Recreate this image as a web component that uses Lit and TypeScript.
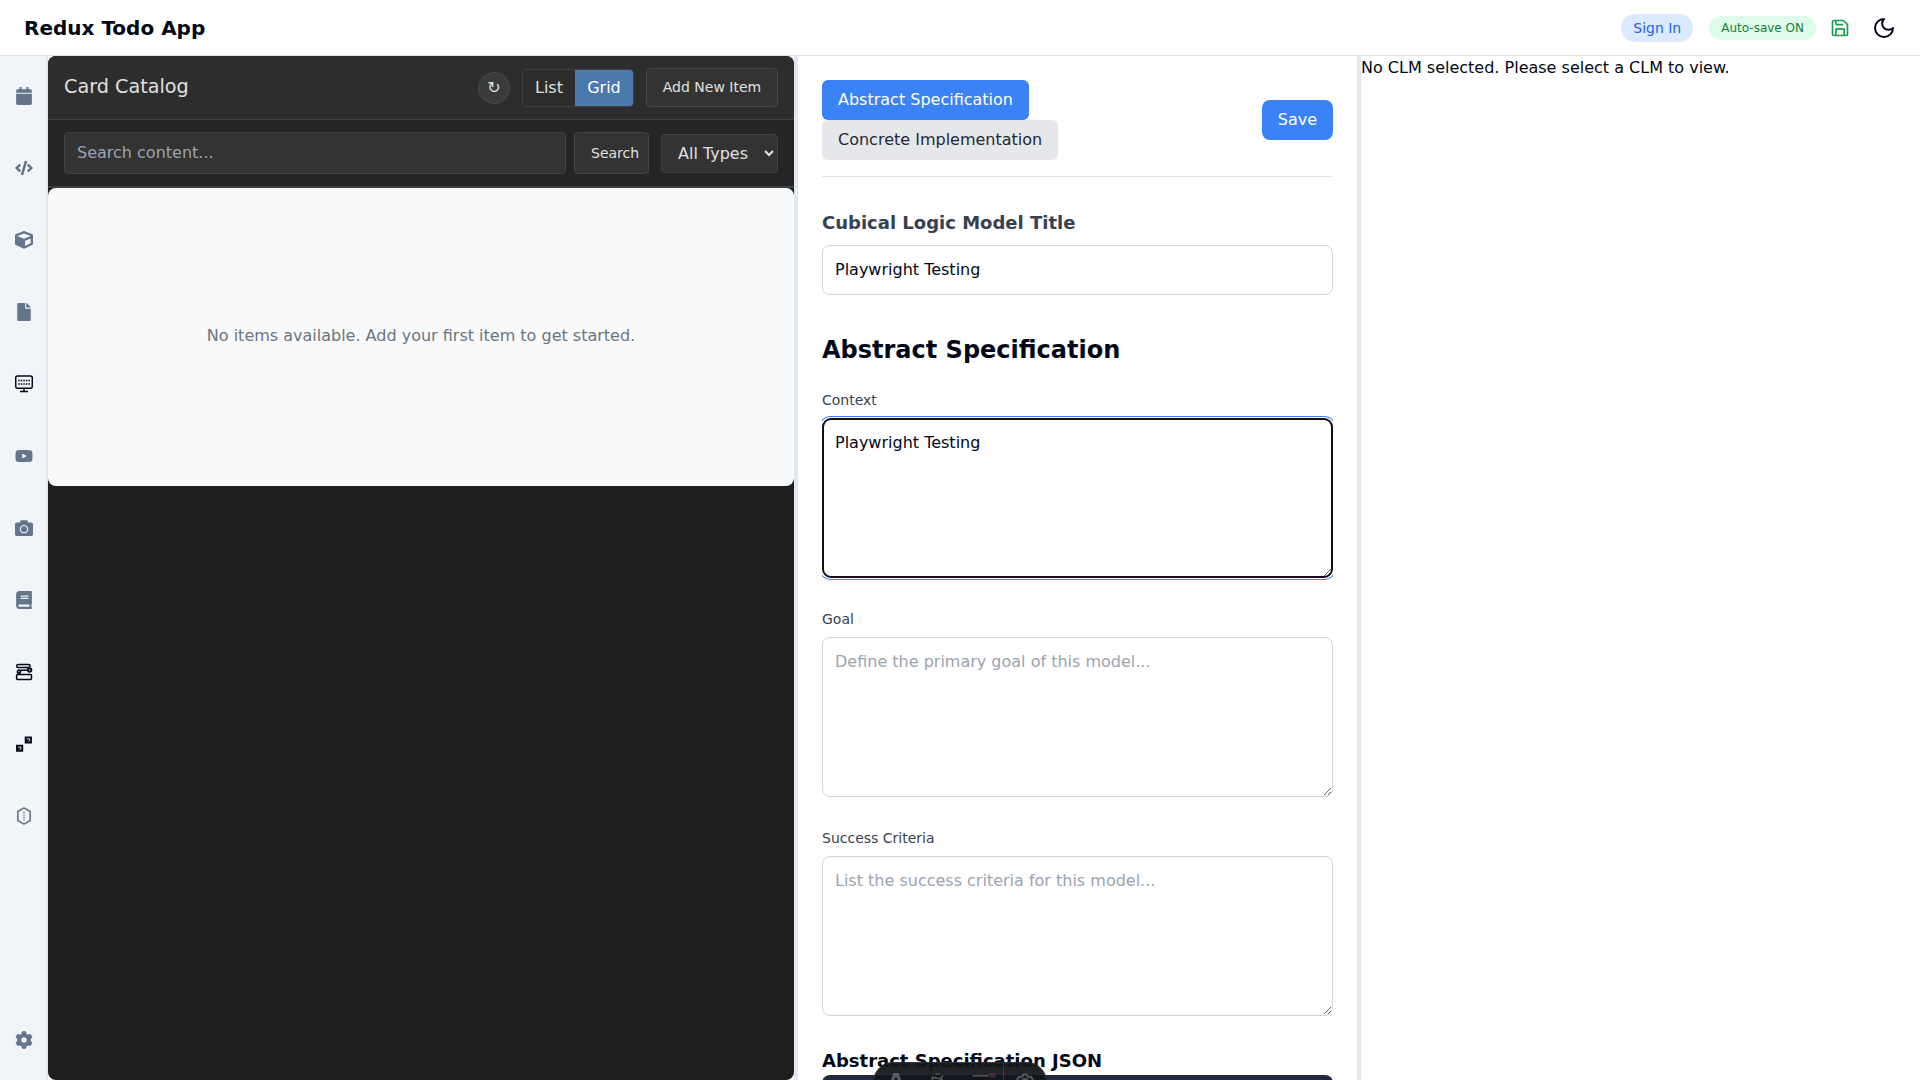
import { LitElement, html, css, svg } from "lit";
import { customElement } from "lit/decorators.js";

const SLATE = "#64748b";
const INK = "#020817";

interface NavIcon {
  box: string;
  body: unknown;
  color: string;
}

const solid = (box: string, d: string): NavIcon => ({ box, color: SLATE, body: svg`<path d=${d}></path>` });

const NAV: NavIcon[] = [
  solid("0 0 448 512", "M12 192h424c6.600 0 12 5.400 12 12v260c0 26.500-21.500 48-48 48H48c-26.500 0-48-21.500-48-48V204c0-6.600 5.400-12 12-12zm436-44v-36c0-26.500-21.500-48-48-48h-48V12c0-6.600-5.400-12-12-12h-40c-6.600 0-12 5.400-12 12v52H160V12c0-6.600-5.400-12-12-12h-40c-6.600 0-12 5.400-12 12v52H48C21.500 64 0 85.500 0 112v36c0 6.600 5.400 12 12 12h424c6.600 0 12-5.400 12-12z"),
  solid("0 0 640 512", "M278.900 511.500l-61-17.700c-6.400-1.800-10-8.500-8.200-14.900L346.200 8.700c1.800-6.400 8.500-10 14.900-8.200l61 17.700c6.400 1.800 10 8.500 8.200 14.900L293.800 503.300c-1.900 6.400-8.500 10.100-14.900 8.200zm-114-112.200l43.500-46.400c4.600-4.900 4.300-12.700-.8-17.200L117 256l90.600-79.700c5.100-4.500 5.500-12.300.8-17.200l-43.500-46.400c-4.500-4.800-12.100-5.100-17-.5L3.800 247.200c-5.100 4.700-5.100 12.800 0 17.500l144.100 135.100c4.900 4.600 12.500 4.400 17-.5zm327.200.6l144.100-135.100c5.100-4.700 5.100-12.800 0-17.500L492.100 112.100c-4.800-4.500-12.400-4.300-17 .5L431.600 159c-4.600 4.900-4.300 12.700.8 17.200L523 256l-90.600 79.700c-5.100 4.500-5.500 12.300-.8 17.200l43.500 46.400c4.500 4.900 12.100 5.100 17 .6z"),
  solid("0 0 512 512", "M239.100 6.300l-208 78c-18.700 7-31.100 25-31.100 45v225.100c0 18.200 10.300 34.800 26.500 42.900l208 104c13.500 6.800 29.400 6.800 42.900 0l208-104c16.300-8.100 26.500-24.800 26.500-42.900V129.300c0-20-12.400-37.900-31.100-44.900l-208-78C262 2.200 250 2.200 239.100 6.300zM256 68.400l192 72v1.100l-192 78-192-78v-1.100l192-72zm32 356V275.500l160-65v133.900l-160 80z"),
  solid("0 0 384 512", "M224 136V0H24C10.700 0 0 10.700 0 24v464c0 13.300 10.700 24 24 24h336c13.300 0 24-10.700 24-24V160H248c-13.200 0-24-10.800-24-24zm160-14.100v6.100H256V0h6.100c6.400 0 12.500 2.500 17 7l97.900 98c4.500 4.500 7 10.600 7 16.900z"),
  {
    box: "0 0 18 18",
    color: INK,
    body: svg`
      <rect x="0.700" y="0.900" width="16.600" height="12.400" rx="1.900" fill="none" stroke="currentColor" stroke-width="1.500"></rect>
      <path d="M3.200 5.600h11.800M3.200 9h11.800" fill="none" stroke="currentColor" stroke-width="1.500" stroke-dasharray="1.500 1.050"></path>
      <path d="M9 13.300v2.800M5 16.600h8" fill="none" stroke="currentColor" stroke-width="1.500"></path>`,
  },
  solid("0 0 576 512", "M549.655 124.083c-6.281-23.650-24.787-42.276-48.284-48.597C458.781 64 288 64 288 64S117.220 64 74.629 75.486c-23.497 6.322-42.003 24.947-48.284 48.597-11.412 42.867-11.412 132.305-11.412 132.305s0 89.438 11.412 132.305c6.281 23.650 24.787 41.500 48.284 47.821C117.220 448 288 448 288 448s170.780 0 213.371-11.486c23.497-6.321 42.003-24.171 48.284-47.821 11.412-42.867 11.412-132.305 11.412-132.305s0-89.438-11.412-132.305zm-317.510 213.508V175.185l142.739 81.205-142.739 81.201z"),
  solid("0 0 512 512", "M512 144v288c0 26.500-21.500 48-48 48H48c-26.500 0-48-21.500-48-48V144c0-26.500 21.500-48 48-48h88l12.300-32.900c7-18.700 24.900-31.100 44.900-31.100h125.500c20 0 37.900 12.400 44.900 31.100L376 96h88c26.500 0 48 21.500 48 48zM376 288c0-66.200-53.800-120-120-120s-120 53.800-120 120 53.800 120 120 120 120-53.800 120-120zm-32 0c0 48.500-39.500 88-88 88s-88-39.500-88-88 39.500-88 88-88 88 39.500 88 88z"),
  solid("0 0 448 512", "M448 360V24c0-13.300-10.700-24-24-24H96C43 0 0 43 0 96v320c0 53 43 96 96 96h328c13.300 0 24-10.700 24-24v-16c0-7.500-3.500-14.300-8.900-18.700-4.200-15.400-4.200-59.300 0-74.700 5.400-4.300 8.900-11.100 8.900-18.600zM128 134c0-3.300 2.700-6 6-6h212c3.300 0 6 2.700 6 6v20c0 3.300-2.700 6-6 6H134c-3.300 0-6-2.700-6-6v-20zm0 64c0-3.300 2.700-6 6-6h212c3.300 0 6 2.700 6 6v20c0 3.300-2.700 6-6 6H134c-3.300 0-6-2.700-6-6v-20zm253.400 250H96c-17.700 0-32-14.300-32-32 0-17.600 14.400-32 32-32h285.400c-1.900 17.100-1.900 46.900 0 64z"),
  {
    box: "0 0 18 18",
    color: INK,
    body: svg`
      <path d="M15 4V2.700a1.100 1.100 0 0 0-1.100-1.100H3.200a1.400 1.400 0 0 0 0 3H14.500M5.500 7.200H12" fill="none" stroke="currentColor" stroke-width="1.500"></path>
      <circle cx="4" cy="8.700" r="1.500" fill="none" stroke="currentColor" stroke-width="1.800"></circle>
      <circle cx="14.600" cy="7" r="1.700" fill="none" stroke="currentColor" stroke-width="2"></circle>
      <rect x="1.600" y="11.600" width="14.900" height="5" rx="1" fill="none" stroke="currentColor" stroke-width="1.500"></rect>`,
  },
  {
    box: "0 0 18 18",
    color: INK,
    body: svg`
      <path d="M9.700 1.400h7.200v7H9.700zM1 9.700h7.200v7H1z"></path>
      <path d="M11.800 3.800h2.800v1.900l-1.300.8M3.100 12.100h2.800v1.900l-1.300.8" fill="none" stroke="#f1f5f9" stroke-width="0.900"></path>`,
  },
  {
    box: "0 0 18 18",
    color: SLATE,
    body: svg`
      <path d="M9 .9l6.200 3.600v9L9 17.100l-6.200-3.600v-9z" fill="none" stroke="currentColor" stroke-width="1.600" stroke-linejoin="round"></path>
      <path d="M9 5v8.600" fill="none" stroke="currentColor" stroke-width="1.500" stroke-dasharray="1.200 1.200"></path>`,
  },
];

const COG = solid("0 0 512 512", "M487.400 315.700l-42.600-24.600c4.300-23.200 4.300-47 0-70.200l42.600-24.600c4.900-2.800 7.100-8.600 5.500-14-11.100-35.600-30-67.800-54.700-94.600-3.800-4.100-10-5.100-14.800-2.300L380.800 110c-17.900-15.400-38.500-27.300-60.800-35.100V25.800c0-5.600-3.900-10.500-9.400-11.700-36.700-8.200-74.300-7.800-109.200 0-5.500 1.200-9.400 6.100-9.400 11.700V75c-22.200 7.900-42.800 19.800-60.800 35.100L88.700 85.500c-4.900-2.800-11-1.900-14.800 2.300-24.700 26.700-43.600 58.900-54.700 94.600-1.700 5.400.6 11.200 5.500 14L67.300 221c-4.300 23.200-4.300 47 0 70.200l-42.600 24.600c-4.900 2.800-7.100 8.600-5.500 14 11.100 35.600 30 67.800 54.700 94.600 3.800 4.100 10 5.100 14.800 2.300l42.600-24.600c17.900 15.400 38.500 27.300 60.800 35.100v49.200c0 5.600 3.900 10.500 9.400 11.700 36.700 8.200 74.300 7.800 109.200 0 5.500-1.200 9.400-6.100 9.400-11.700v-49.200c22.200-7.900 42.800-19.800 60.800-35.100l42.600 24.600c4.900 2.800 11 1.900 14.800-2.300 24.700-26.700 43.600-58.900 54.700-94.600 1.500-5.500-.7-11.300-5.600-14.100zM256 336c-44.100 0-80-35.900-80-80s35.900-80 80-80 80 35.900 80 80-35.900 80-80 80z");

const shared = css`
  *, *::before, *::after { box-sizing: border-box; }
  button, input, select, textarea { font: inherit; color: inherit; margin: 0; }
  h1, h2, h3, p { margin: 0; }
  svg { display: block; }
`;

@customElement("app-header")
class AppHeader extends LitElement {
  static styles = [shared, css`
    :host { display: flex; align-items: center; justify-content: space-between; height: 56px; padding: 0 24px; background: #fff; border-bottom: 1px solid #e2e4e7; }
    .title { font-size: 20px; line-height: 28px; font-weight: 700; }
    .actions { display: flex; align-items: center; }
    .signin { height: 28px; padding: 4px 12px; border: 0; border-radius: 14px; background: #dbeafe; color: #2563eb; font-size: 14px; line-height: 20px; margin-right: 16px; }
    .autosave { height: 24px; padding: 4px 12px; border-radius: 12px; background: #dcfce7; color: #15803d; font-size: 12px; line-height: 16px; margin-right: 14px; }
    .disk { color: #16a34a; margin-right: 22px; }
  `];
  render() {
    return html`
      <h1 class="title">Redux Todo App</h1>
      <div class="actions">
        <button class="signin">Sign In</button>
        <span class="autosave">Auto-save ON</span>
        <svg class="disk" width="20" height="20" viewBox="0 0 24 24" fill="none" stroke="currentColor" stroke-width="2" stroke-linecap="round" stroke-linejoin="round">
          <path d="M15.200 3a2 2 0 0 1 1.400.6l3.800 3.800a2 2 0 0 1 .6 1.400V19a2 2 0 0 1-2 2H5a2 2 0 0 1-2-2V5a2 2 0 0 1 2-2z"></path>
          <path d="M17 21v-7a1 1 0 0 0-1-1H8a1 1 0 0 0-1 1v7"></path>
          <path d="M7 3v4a1 1 0 0 0 1 1h7"></path>
        </svg>
        <svg width="24" height="24" viewBox="0 0 24 24" fill="none" stroke="currentColor" stroke-width="2" stroke-linecap="round" stroke-linejoin="round">
          <path d="M12 3a6 6 0 0 0 9 9 9 9 0 1 1-9-9Z"></path>
        </svg>
      </div>`;
  }
}

@customElement("side-nav")
class SideNav extends LitElement {
  static styles = [shared, css`
    :host { display: flex; flex-direction: column; justify-content: space-between; width: 48px; padding: 4px 0; background: #f1f5f9; border-right: 2px solid #e5e7eb; }
    .item { display: flex; align-items: center; justify-content: center; width: 48px; height: 72px; }
    .item svg { width: 18px; height: 18px; fill: currentColor; }
    .slate { color: #64748b; }
    .ink { color: #020817; }
  `];
  private icon(i: NavIcon) {
    return html`<div class="item ${i.color === SLATE ? "slate" : "ink"}"><svg viewBox=${i.box}>${i.body}</svg></div>`;
  }
  render() {
    return html`<div>${NAV.map((i) => this.icon(i))}</div><div>${this.icon(COG)}</div>`;
  }
}

@customElement("card-catalog")
class CardCatalog extends LitElement {
  static styles = [shared, css`
    :host { display: flex; flex-direction: column; width: 746px; border-radius: 8px; overflow: hidden; background: #1e1e1e; color: #e0e0e0; }
    .head { display: flex; align-items: center; height: 64px; padding: 0 16px; background: #2d2d2d; border-bottom: 1px solid #404040; }
    .title { flex: 1; font-size: 19.2px; line-height: 28px; font-weight: 400; padding-bottom: 2px; }
    .refresh { display: flex; align-items: center; justify-content: center; width: 32px; height: 32px; padding: 0; border: 1px solid #4a4a4a; border-radius: 50%; background: #3a3a3a; font-size: 16px; line-height: 24px; margin-right: 12px; }
    .views { display: flex; width: 112px; height: 38px; border: 1px solid #404040; border-radius: 4px; overflow: hidden; margin-right: 12px; }
    .view { padding: 0 12px; border: 0; background: transparent; line-height: 24px; }
    .on { flex: 1; background: #4a7aab; color: #fff; }
    .add { width: 132px; height: 39px; padding: 0 0 1px; border: 1px solid #454545; border-radius: 4px; background: #333; font-size: 14px; line-height: 22px; }
    .search { display: flex; align-items: center; height: 68px; padding: 0 16px; background: #252525; border-bottom: 2px solid #404040; }
    .query { flex: 1; min-width: 0; height: 42px; padding: 7px 12px 9px; border: 1px solid #404040; border-radius: 4px; background: #333; margin-right: 8px; outline: 0; }
    .query::placeholder { color: #9ca3af; opacity: 1; }
    .go { width: 75px; height: 42px; padding: 0 0 0 16px; text-align: left; border: 1px solid #454545; border-radius: 4px; background: #333; font-size: 14px; margin-right: 12px; }
    .types { width: 117px; height: 39px; padding: 0 0 0 12px; border: 1px solid #404040; border-radius: 4px; background-color: #333; }
    .empty { display: flex; align-items: center; justify-content: center; height: 298px; padding-bottom: 2px; border-radius: 8px; background: #f8fafc; color: #6c757d; }
  `];
  render() {
    return html`
      <div class="head">
        <h2 class="title">Card Catalog</h2>
        <button class="refresh">↻</button>
        <div class="views"><button class="view">List</button><button class="view on">Grid</button></div>
        <button class="add">Add New Item</button>
      </div>
      <div class="search">
        <input class="query" placeholder="Search content..." />
        <button class="go">Search</button>
        <select class="types"><option>All Types</option></select>
      </div>
      <p class="empty">No items available. Add your first item to get started.</p>`;
  }
}

@customElement("clm-editor")
class ClmEditor extends LitElement {
  static styles = [shared, css`
    :host { display: block; width: 567px; padding: 24px; background: #fff; border: 4px solid #e2e8f0; border-width: 0 4px; overflow: hidden; }
    .body { overflow: hidden; height: 1100px; }
    .bar { display: flex; align-items: center; justify-content: space-between; height: 97px; padding-bottom: 16px; border-bottom: 1px solid #e5e7eb; margin-bottom: 32px; }
    .tabs { display: flex; flex-direction: column; align-items: flex-start; }
    .btn { height: 40px; padding: 8px 16px; border: 0; border-radius: 8px; line-height: 24px; background: #3b82f6; color: #fff; white-space: nowrap; }
    .idle { background: #e5e7eb; color: #1f2937; border-radius: 6px; }
    .tab { border-radius: 6px; }
    .name { display: block; font-size: 18px; line-height: 28px; font-weight: 600; color: #374151; margin-bottom: 8px; }
    .field { display: block; width: 100%; padding: 12px; border: 1px solid #d1d5db; border-radius: 8px; background: #fff; line-height: 24px; outline: 0; }
    .line { height: 50px; padding: 11px 12px 13px; margin-bottom: 37px; }
    .h2 { font-size: 24px; line-height: 36px; font-weight: 700; margin-bottom: 22px; }
    .label { display: block; font-size: 14px; line-height: 20px; color: #374151; margin-bottom: 8px; }
    .area { height: 160px; resize: vertical; margin-bottom: 31px; }
    .area::placeholder { color: #9ca3af; opacity: 1; }
    .focused { outline: 1px auto -webkit-focus-ring-color; border-color: transparent; box-shadow: 0 0 0 2px #3b82f6; }
    .h3 { font-size: 18px; line-height: 28px; font-weight: 600; margin-bottom: 0; }
    .json { height: 120px; border-radius: 8px; background: #1e293b; }
  `];
  render() {
    return html`
      <div class="body">
        <div class="bar">
          <div class="tabs">
            <button class="btn tab">Abstract Specification</button>
            <button class="btn idle">Concrete Implementation</button>
          </div>
          <button class="btn">Save</button>
        </div>
        <label class="name">Cubical Logic Model Title</label>
        <input class="field line" .value=${"Playwright Testing"} />
        <h2 class="h2">Abstract Specification</h2>
        <label class="label">Context</label>
        <textarea class="field area focused" .value=${"Playwright Testing"}></textarea>
        <label class="label">Goal</label>
        <textarea class="field area" placeholder="Define the primary goal of this model..."></textarea>
        <label class="label">Success Criteria</label>
        <textarea class="field area" placeholder="List the success criteria for this model..."></textarea>
        <h3 class="h3">Abstract Specification JSON</h3>
        <div class="json"></div>
      </div>`;
  }
}

@customElement("dev-toolbar")
class DevToolbar extends LitElement {
  static styles = [shared, css`
    :host { position: absolute; left: 873px; top: 1062px; width: 174px; height: 40px; display: flex; border: 1px solid #2c2f37; border-radius: 20px; background: linear-gradient(180deg, #13151a 0%, rgba(19, 21, 26, 0.88) 100%); opacity: 0.96; overflow: hidden; color: #56585d; }
    .slot { display: flex; justify-content: center; flex: none; width: 43px; padding-top: 10px; }
    .last { border-left: 1px solid #343841; width: 42px; }
  `];
  render() {
    return html`
      <div class="slot"><svg width="16" height="20" viewBox="0 0 16 20" fill="currentColor"><path d="M5.200 0h5.600L16 15.500c-1.500-.7-3-1.100-4.500-1.300L8.900 5H7.100l-2.600 9.200C3 14.400 1.500 14.800 0 15.500z"></path></svg></div>
      <div class="slot"><svg width="18" height="20" viewBox="0 0 18 20" fill="none" stroke="currentColor" stroke-width="1.600"><path d="M2 4l11 2.500M2 4l3 12M13 2.500L8 8M6 0l.8 1.800M9 0l-.3 1.800"></path></svg></div>
      <div class="slot"><svg width="28" height="20" viewBox="0 0 28 20"><path d="M4.500 2.800h16M4.500 9h16" fill="none" stroke="currentColor" stroke-width="1.600"></path><circle cx="24.500" cy="1.200" r="3.500" fill="#4b2637"></circle></svg></div>
      <div class="slot last"><svg width="18" height="20" viewBox="0 0 18 20" fill="none" stroke="currentColor" stroke-width="1.900" stroke-linejoin="round"><path d="M7.200 1.500h3.600l.6 2 1.500.8 2.200-.6 1.800 3-1.600 1.600v2l1.600 1.600-1.800 3M7.200 1.500l-.6 2-1.500.8-2.200-.6-1.800 3 1.600 1.600v2L1.100 11.900l1.800 3"></path><circle cx="9" cy="9" r="3"></circle></svg></div>`;
  }
}

@customElement("app-root")
class AppRoot extends LitElement {
  static styles = [shared, css`
    :host { display: block; position: relative; width: 1920px; height: 1080px; overflow: hidden; background: #fff; color: #020817; font-family: "DejaVu Sans", sans-serif; font-size: 16px; line-height: 24px; }
    .main { display: flex; height: 1024px; }
    .main > * { flex: none; }
    .viewer { flex: 1; }
  `];
  render() {
    return html`
      <app-header></app-header>
      <div class="main">
        <side-nav></side-nav>
        <card-catalog></card-catalog>
        <clm-editor></clm-editor>
        <p class="viewer">No CLM selected. Please select a CLM to view.</p>
      </div>
      <dev-toolbar></dev-toolbar>`;
  }
}
